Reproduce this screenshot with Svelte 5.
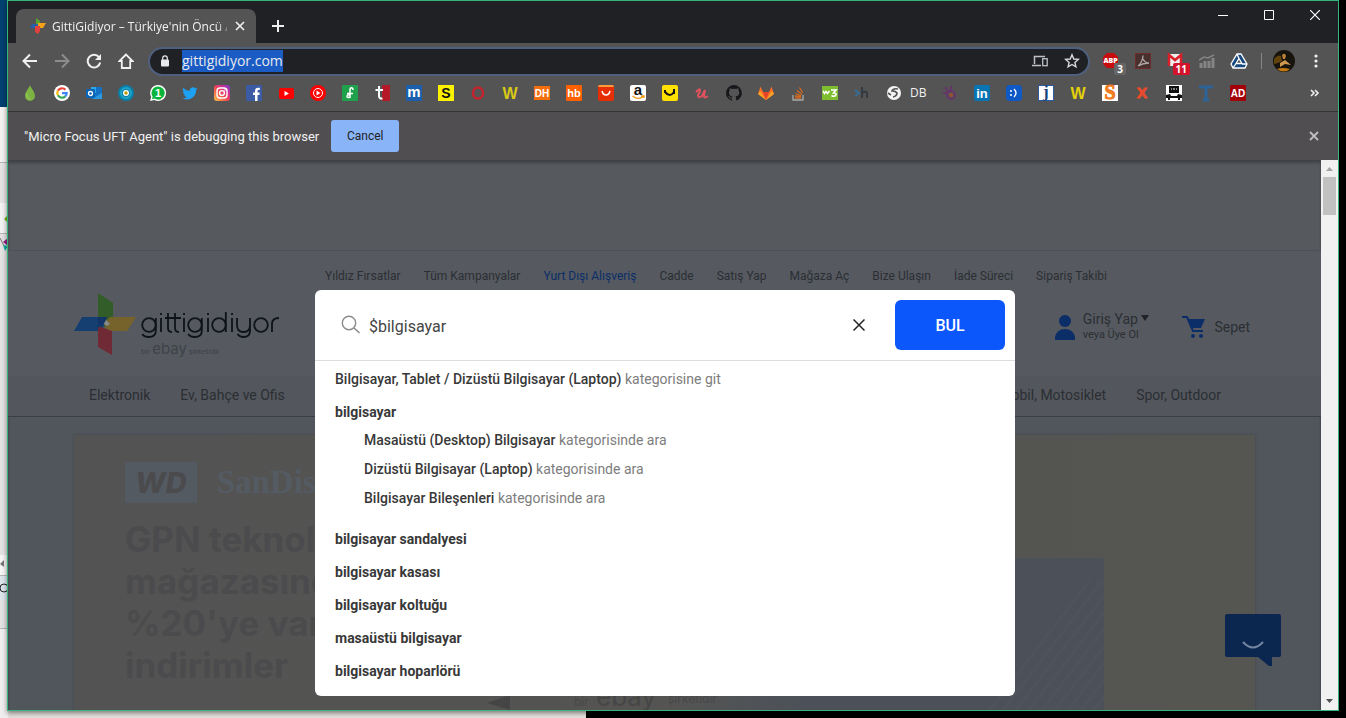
<script>
  import { onMount } from 'svelte';

  let address = $state('gittigidiyor.com');
  let query = $state('$bilgisayar');
  let addressBox;

  onMount(() => {
    addressBox.focus({ preventScroll: true });
    addressBox.select();
  });

  const letter = (s, fill, size = 13, y = 13, extra = 'font-weight="700"') =>
    `<text x="8" y="${y}" text-anchor="middle" font-family="Liberation Sans, sans-serif" font-size="${size}" fill="${fill}" ${extra}>${s}</text>`;
  const tile = (fill, r = 1) => `<rect width="16" height="16" rx="${r}" fill="${fill}"/>`;

  const bookmarks = [
    { name: 'Drop', art: '<path d="M8 0C9 3 13 7 13 11a5 5 0 0 1-10 0C3 7 7 3 8 0Z" fill="#7cb342"/><path d="M5 8q-1 5 3 6" stroke="#9bd05c" fill="none"/>' },
    { name: 'Google', art: '<circle cx="8" cy="8" r="8" fill="#fff"/><g fill="none" stroke-width="2.200"><path d="M3.900 5.700A4.700 4.700 0 0 1 11.400 4.700" stroke="#ea4335"/><path d="M3.900 5.700a4.700 4.700 0 0 0 0 4.600" stroke="#fbbc05"/><path d="M3.900 10.300a4.700 4.700 0 0 0 7.400 1.100" stroke="#34a853"/><path d="M11.300 11.400A4.700 4.700 0 0 0 12.700 8.200H8" stroke="#4285f4"/></g>' },
    { name: 'Outlook', art: '<rect x="5" y="2" width="11" height="12" rx="1" fill="#1470c4"/><path d="M5 2h5v6H5z" fill="#28a8ea"/><path d="M6 14 16 8v6H6z" fill="#2b9ae0"/><rect y="4" width="9" height="9" rx="1" fill="#0a63b5"/><circle cx="4.500" cy="8.500" r="2" fill="none" stroke="#fff" stroke-width="1.300"/>' },
    { name: 'Target', art: '<circle cx="8" cy="8" r="8" fill="#087fa8"/><circle cx="8" cy="8" r="5" fill="none" stroke="#22a4c8" stroke-width="2"/><circle cx="8" cy="8" r="3" fill="#fff"/><circle cx="8" cy="8" r="1.700" fill="#b99800"/>' },
    { name: 'WhatsApp', art: '<path d="M8 0a8 8 0 1 1-3.800 15L0 16l1.200-4A8 8 0 0 1 8 0Z" fill="#fff"/><path d="M8 1.400a6.600 6.600 0 1 1-3.400 12.200L2 14.200l.7-2.500A6.600 6.600 0 0 1 8 1.400Z" fill="#08b43a"/>' + letter('1', '#fff', 11, 12) },
    { name: 'Twitter', art: '<path d="M15.500 3.500l-1.600.6L15 2.400l-2 .8A3.200 3.200 0 0 0 7.600 6 8.800 8.800 0 0 1 1.300 2.700a3.200 3.200 0 0 0 1 4.200L.9 6.500A3.200 3.200 0 0 0 3.400 9.600L2 9.700A3.200 3.200 0 0 0 5 12 6.500 6.500 0 0 1 .4 13.200 9 9 0 0 0 14 5.300Z" fill="#1da1f2"/>' },
    { name: 'Instagram', art: '<defs><linearGradient id="ig" x1="0" y1="1" x2="1" y2="0"><stop offset="0" stop-color="#fdc648"/><stop offset=".45" stop-color="#ef4a4e"/><stop offset=".7" stop-color="#d42e92"/><stop offset="1" stop-color="#6a3fd0"/></linearGradient></defs><rect width="16" height="16" rx="3" fill="url(#ig)"/><g fill="none" stroke="#fff" stroke-width="1.400"><rect x="3" y="3" width="10" height="10" rx="3"/><circle cx="8" cy="8" r="2.400"/></g><circle cx="11" cy="5" r=".8" fill="#fff"/>' },
    { name: 'Facebook', art: tile('#3b5ba5') + '<path d="M9 16V10H7V7.500h2V6c0-2.200 1.200-3.200 3-3.200h1.800v2.300h-1.200c-.9 0-1.100.4-1.100 1.200v1.200h2.200L13.400 10h-1.900v6Z" fill="#fff"/>' },
    { name: 'YouTube', art: '<rect x="1" y="3" width="15" height="11" rx="2" fill="#f00"/><path d="M6.500 6v5L11 8.500Z" fill="#fff"/>' },
    { name: 'YouTube Music', art: '<circle cx="8" cy="8" r="8" fill="#f00"/><circle cx="8" cy="8" r="4.500" fill="none" stroke="#fff"/><path d="M6.500 5.500v5l4-2.500Z" fill="#fff"/>' },
    { name: 'Green', art: tile('#1fa04b') + '<path d="M11 5C11 2 8 2 8 5v8M5 8.500h6M8 10c-4-1-4 4 0 2" stroke="#fff" stroke-width="1.500" fill="none"/>' },
    { name: 'Tureng', art: '<rect x="8" width="8" height="16" fill="#b51826"/><path d="M5 1v10q0 3 3.500 2.500M1.500 5H9" stroke="#fff" stroke-width="2" fill="none"/>' },
    { name: 'm', art: tile('#1b5fad') + letter('m', '#fff', 15, 12) },
    { name: 'S', art: tile('#fff200', 0) + letter('S', '#111', 14, 13) },
    { name: 'O', art: '<ellipse cx="8" cy="8" rx="5" ry="5.500" fill="none" stroke="#c5232d" stroke-width="2.500"/>' },
    { name: 'W', art: letter('W', '#d9c916', 16, 14) },
    { name: 'DH', art: '<rect y="1" width="16" height="14" fill="#f36f0d"/>' + letter('DH', '#fff', 10, 12) },
    { name: 'hb', art: tile('#ff6000') + letter('hb', '#fff', 11, 12) },
    { name: 'AliExpress', art: tile('#e62e04', 2) + '<path d="M2 0h12q2 0 2 2H0q0-2 2-2Z" fill="#ff9a3d"/><path d="M4 6q1 4 4 4t4-4" stroke="#fff" stroke-width="1.500" fill="none"/>' },
    { name: 'Amazon', art: tile('#fff', 2) + letter('a', '#111', 15, 10) + '<path d="M2.500 11q5.500 4.500 11 .5M11 11h3v2" stroke="#f39b18" stroke-width="1.300" fill="none"/>' },
    { name: 'Letgo', art: tile('#ffe000', 2) + '<path d="M3 5v2q5 6 9 0M12 4v5" stroke="#111" stroke-width="2" fill="none"/>' },
    { name: 'Udemy', art: '<path d="M2 7q4-4 4-2T4 10q0 4 4 1l3-6-1 6q0 3 4 0" stroke="#e0525e" stroke-width="2" fill="none"/>' },
    { name: 'GitHub', art: '<path d="M8 0a8 8 0 0 0-2.500 15.600c.4.100.5-.2.500-.4v-1.500c-2.200.5-2.700-1-2.700-1-.4-.9-.9-1.200-.9-1.200-.7-.5.100-.5.100-.5.800.100 1.200.8 1.200.8.700 1.300 1.900.9 2.400.7.100-.5.300-.9.500-1.100-1.800-.2-3.600-.9-3.600-4 0-.9.300-1.600.8-2.100-.100-.2-.4-1 .100-2.100 0 0 .7-.2 2.200.8a7.500 7.500 0 0 1 4 0c1.500-1 2.200-.8 2.200-.8.400 1.100.2 1.900.100 2.100.5.600.8 1.300.8 2.100 0 3.100-1.900 3.700-3.700 4 .3.300.6.800.6 1.500v2.200c0 .2.100.5.500.4A8 8 0 0 0 8 0Z" fill="#16181b"/>' },
    { name: 'GitLab', art: '<path d="M8 15 0 9 2.500 1.500 5 7h6l2.500-5.500L16 9Z" fill="#fc6d26"/><path d="M8 15 5 7h6Z" fill="#e24329"/><path d="M8 15 0 9l2-3ZM8 15l8-6-2-3Z" fill="#fca326"/>' },
    { name: 'Stack Overflow', art: '<path d="M3 10v5h10v-5" stroke="#a9a9a9" stroke-width="1.300" fill="none"/><path d="M5 13h6M5 11l6 .5M5.500 8.500l5.500 2M7 5.500l5 4M9.500 2.500l3 5" stroke="#d26a20" stroke-width="1.300"/>' },
    { name: 'W3', art: '<rect y="1" width="16" height="14" fill="#7ebc30"/><path d="M1 6l1.500 2.500L4 6.500l1.500 2L7.500 6M9 5h5L11.500 8q4 0 2 2.500-2 1.500-4 0" stroke="#fff" stroke-width="1.600" fill="none"/>' },
    { name: 'sh', art: '<path d="M1 5l4 3-4 3" stroke="#396c96" stroke-width="2" fill="none"/><path d="M8 2v11M8 8q5-3 5 1v4" stroke="#333a42" stroke-width="2" fill="none"/>' },
    { name: 'DB', label: 'DB', art: '<circle cx="8" cy="8" r="7" fill="#f5f5f5"/><path d="M12 4q-5-1-6 2 4 0 5 2 0 3-4 4M2 8l3 2" stroke="#555" stroke-width="1.700" fill="none"/>' },
    { name: 'Flower', art: '<g fill="none" stroke="#65346b" stroke-width="2"><circle cx="9" cy="10" r="4"/><path d="M3 2l3 4M9 1v4M1 8h4"/></g><circle cx="9" cy="10" r="2" fill="#99502d"/>' },
    { name: 'LinkedIn', art: tile('#0874b2', 2) + letter('in', '#fff', 13, 13) },
    { name: 'Smile', art: tile('#0e59c6', 4) + '<circle cx="5" cy="6" r="1" fill="#fff"/><circle cx="5" cy="10" r="1" fill="#fff"/><path d="M8 4q4 4 0 8" stroke="#fff" stroke-width="1.300" fill="none"/>' },
    { name: 'j', art: tile('#2d5ca5', 0) + '<rect x="1" y="1" width="14" height="14" fill="#fff"/><text x="8" y="12" text-anchor="middle" font-family="Liberation Serif, serif" font-weight="700" font-size="16" fill="#174280">j</text>' },
    { name: 'W', art: letter('W', '#e3d10a', 16, 14) },
    { name: 'S', art: tile('#fff', 0) + '<text x="8" y="14" text-anchor="middle" font-family="Liberation Serif, serif" font-weight="700" font-size="20" fill="#f07b21" stroke="#f07b21">S</text>' },
    { name: 'X', art: letter('X', '#e94b2b', 15, 13, 'font-weight="700" stroke="#e94b2b"') },
    { name: 'Car', art: tile('#fff', 0) + '<path d="M3 1h10v7H3zM0 10l4-1 1 2h6l1-2 4 1v3h-2v2h-2v-2H4v2H2v-2H0Z" fill="#111"/><path d="M5 4h1M7 4h2M10 4h1" stroke="#fff"/>' },
    { name: 'T', art: '<path d="M1 2h14M8 2v13M5 15h6" stroke="#2d6397" stroke-width="3"/>' },
    { name: 'AD', art: tile('#a40008') + letter('AD', '#fff', 10, 12) }
  ];

  const siteLinks = ['Yıldız Fırsatlar', 'Tüm Kampanyalar', 'Yurt Dışı Alışveriş', 'Cadde', 'Satış Yap', 'Mağaza Aç', 'Bize Ulaşın', 'İade Süreci', 'Sipariş Takibi'];
  const categories = ['Masaüstü (Desktop) Bilgisayar', 'Dizüstü Bilgisayar (Laptop)', 'Bilgisayar Bileşenleri'];
  const related = ['bilgisayar sandalyesi', 'bilgisayar kasası', 'bilgisayar koltuğu', 'masaüstü bilgisayar', 'bilgisayar hoparlörü'];
</script>

<div class="desktop">
  <svg class="behind" width="8" height="718" viewBox="0 0 8 718" aria-hidden="true">
    <rect width="8" height="718" fill="#e4e2e3" />
    <rect width="8" height="107" fill="#00406f" />
    <rect y="107" width="8" height="55" fill="#f3f2f1" />
    <path d="M0 162.500h8M0 210.500h8M0 233.500h8M0 575.500h8M0 628.500h8" stroke="#b5b5b5" />
    <rect y="203" width="8" height="30" fill="#f2f2f2" />
    <path d="M8 215l-4 4 4 4Z" fill="#75b51a" />
    <path d="M0 238l4 8" stroke="#777" />
    <path d="M8 238l-5 4 5 4Z" fill="#9b168b" /><path d="M8 246l-5-1 2 6Z" fill="#13aaa1" />
    <rect y="555" width="8" height="20" fill="#f5f5f5" /><path d="M4 560v7l-4-3Z" fill="#777" />
    <rect y="576" width="8" height="24" fill="#dce4ec" />
    <circle cx="4" cy="588" r="4" fill="none" stroke="#222" />
    <rect y="629" width="8" height="89" fill="#f0eeee" />
  </svg>

  <div class="window">
    <header class="titlebar">
      <div class="tab">
        <svg width="16" height="16" viewBox="0 0 16 16" aria-hidden="true"><path d="M6 0l4 3v5H6Z" fill="#5aa02c" /><path d="M8 5h8l-3 5H8Z" fill="#f5a11a" /><path d="M0 10l2-4h6v4Z" fill="#285fa8" /><path d="M5 8h5v5l-2 3-3-2Z" fill="#e2403c" /></svg>
        <span class="tab-title">GittiGidiyor – Türkiye'nin Öncü Al</span>
        <button aria-label="Close tab"><svg width="10" height="10" viewBox="0 0 10 10"><path d="M1 1l8 8M9 1l-8 8" stroke="#eee" stroke-width="1.700" /></svg></button>
      </div>
      <button class="new-tab" aria-label="New tab"><svg width="12" height="12" viewBox="0 0 12 12"><path d="M6 0v12M0 6h12" stroke="#eee" stroke-width="2" /></svg></button>
      <div class="window-controls">
        <button aria-label="Minimize"><svg width="10" height="10" viewBox="0 0 10 10"><path d="M0 5.500h10" stroke="#fff" /></svg></button>
        <button aria-label="Maximize"><svg width="10" height="10" viewBox="0 0 10 10"><path d="M.5.500h9v9h-9z" stroke="#fff" fill="none" /></svg></button>
        <button aria-label="Close"><svg width="10" height="10" viewBox="0 0 10 10"><path d="M0 0l10 10M10 0L0 10" stroke="#fff" stroke-width="1.200" /></svg></button>
      </div>
    </header>

    <div class="toolbar">
      <button aria-label="Back"><svg width="16" height="16" viewBox="0 0 16 16"><path d="M15 8H2M8 1.500L1.500 8 8 14.500" fill="none" stroke="#f1f1f1" stroke-width="2" /></svg></button>
      <button aria-label="Forward"><svg width="16" height="16" viewBox="0 0 16 16"><path d="M1 8h13M8 1.500L14.500 8 8 14.500" fill="none" stroke="#8d8d8d" stroke-width="2" /></svg></button>
      <button aria-label="Reload"><svg width="16" height="16" viewBox="0 0 16 16"><path d="M13 4.200A6.300 6.300 0 1 0 14.200 9.500" fill="none" stroke="#f1f1f1" stroke-width="2" /><path d="M15 1v6H9Z" fill="#f1f1f1" /></svg></button>
      <button aria-label="Home"><svg width="16" height="16" viewBox="0 0 16 16"><path d="M8 1.500L1.500 8h2.300v7h8.400V8h2.300Z" fill="none" stroke="#f1f1f1" stroke-width="1.800" /></svg></button>
      <div class="omnibox">
        <svg width="10" height="12" viewBox="0 0 10 12" aria-hidden="true"><rect x="1" y="4.500" width="8" height="7" rx="1" fill="#e8eaed" /><path d="M2.700 5V3.200a2.300 2.300 0 0 1 4.600 0V5" fill="none" stroke="#e8eaed" stroke-width="1.200" /></svg>
        <input aria-label="Address" bind:value={address} bind:this={addressBox} spellcheck="false" />
        <button aria-label="Send to devices"><svg width="16" height="14" viewBox="0 0 16 14"><path d="M2.500 10V2.500H13M0 11.500h9" fill="none" stroke="#bdc1c6" stroke-width="1.500" /><rect x="10.700" y="4.700" width="4.500" height="7" fill="none" stroke="#bdc1c6" stroke-width="1.300" /></svg></button>
        <button aria-label="Bookmark this page"><svg width="16" height="16" viewBox="0 0 16 16"><path d="M8 1.800l1.800 4.200 4.500.4-3.400 3 1 4.400L8 11.500l-3.900 2.300 1-4.400-3.400-3L6.200 6Z" fill="none" stroke="#d7d9dc" stroke-width="1.400" /></svg></button>
      </div>
      <button aria-label="Adblock Plus"><svg width="22" height="20" viewBox="0 0 22 20"><path d="M7 2h7l4 4v7l-4 4H7l-4-4V6Z" fill="#c70d0d" /><text x="10.500" y="12" text-anchor="middle" font-family="Open Sans, sans-serif" font-weight="800" font-size="7" fill="#fff">ABP</text></svg><span class="badge gray">3</span></button>
      <button aria-label="PDF"><svg width="16" height="16" viewBox="0 0 16 16"><rect x=".5" y=".5" width="15" height="15" fill="#48302f" stroke="#6b2c2b" /><path d="M3 13C6 11 8 6 8 2.500M8 6q2 4 6 4-6 0-11 3" stroke="#b0a7a6" stroke-width="1.300" fill="none" /></svg></button>
      <button aria-label="Mail"><svg width="22" height="20" viewBox="0 0 22 20"><rect x="4" y="3" width="14" height="12" fill="#eee" /><path d="M5 15V4l6 5 6-5v11" stroke="#d9202a" stroke-width="2.500" fill="none" /></svg><span class="badge red">11</span></button>
      <button aria-label="Statistics"><svg width="16" height="16" viewBox="0 0 16 16"><path d="M2 10v5M6 8v7M10 8v7M14 5v10" stroke="#858585" stroke-width="3" /><path d="M0 7l5-3 4 1 6-3" stroke="#858585" stroke-width="1.500" fill="none" /></svg></button>
      <button aria-label="Drive"><svg width="18" height="16" viewBox="0 0 18 16"><path d="M7 1h4l6 10-2 4H3l-2-4Z" fill="#17497e" stroke="#fff" stroke-width="1.300" /><path d="M9 5.500l3 5H6ZM7 1l2 4.500M17 11h-5M3 15l3-4.500" fill="#545454" stroke="#fff" stroke-width="1.300" /></svg></button>
      <span class="separator"></span>
      <svg class="avatar" width="22" height="22" viewBox="0 0 22 22" role="img" aria-label="Profile"><circle cx="11" cy="11" r="11" fill="#17130d" /><path d="M1 9q4-5 7-3l1 5-4 2-4 1Z" fill="#61430b" /><path d="M9 5q3-3 4 1l-1 3h-2Z" fill="#b98238" /><path d="M7 13l5-3 6 5-6-1-5 3Z" fill="#cf9850" /><path d="M4 19q5-2 13 0-6 5-13 0Z" fill="#c27810" /></svg>
      <button class="more" aria-label="Menu"><svg width="4" height="16" viewBox="0 0 4 16"><g fill="#f1f1f1"><circle cx="2" cy="3" r="1.600" /><circle cx="2" cy="8" r="1.600" /><circle cx="2" cy="13" r="1.600" /></g></svg></button>
    </div>

    <nav class="bookmarks" aria-label="Bookmarks">
      {#each bookmarks as mark}
        <a href="#bookmark" aria-label={mark.name}>
          <svg width="16" height="16" viewBox="0 0 16 16" aria-hidden="true">{@html mark.art}</svg>
          {#if mark.label}<span>{mark.label}</span>{/if}
        </a>
      {/each}
      <button aria-label="More bookmarks"><svg width="10" height="8" viewBox="0 0 10 8"><path d="M1 1l3 3-3 3M5 1l3 3-3 3" fill="none" stroke="#f1f1f1" stroke-width="1.600" /></svg></button>
    </nav>

    <div class="infobar">
      <span>"Micro Focus UFT Agent" is debugging this browser</span>
      <button class="cancel">Cancel</button>
      <button class="dismiss" aria-label="Dismiss"><svg width="10" height="10" viewBox="0 0 10 10"><path d="M1 1l8 8M9 1L1 9" stroke="#c0c0c0" stroke-width="1.800" /></svg></button>
    </div>

    <div class="viewport">
      <div class="page">
        <div class="strip"></div>
        <div class="site-head">
          <div class="inner">
            <nav class="site-links" aria-label="Site">
              {#each siteLinks as link, i}<a href="#site" class:current={i === 2}>{link}</a>{/each}
            </nav>
            <div class="brand-row">
              <a class="logo" href="#home" aria-label="gittigidiyor">
                <svg width="62" height="62" viewBox="0 0 62 62" aria-hidden="true"><path d="M24 0l15 10v20l-8 4-7-5Z" fill="#335d28" /><path d="M8 24h25l-5 14H0Z" fill="#153f70" /><path d="M36 24h26l-9 14H33l-3-8Z" fill="#76622b" /><path d="M24 33l14 5v24l-14-8Z" fill="#702a35" /><path d="M24 24h9l-3 6-6 5Z" fill="#123466" /><path d="M32 27l4 4-3 2-3-2Z" fill="#858b91" /></svg>
                <span class="wordmark">
                  <svg width="140" height="34" viewBox="0 0 140 34" role="img" aria-label="gittigidiyor">
                    <g fill="none" stroke="#0e121b" stroke-width="1.800">
                      <circle cx="8" cy="16" r="6.800" /><path d="M14.800 9v13q0 6-7 6-5 0-6.500-3" />
                      <path d="M20 9v14M20 4v2" />
                      <path d="M27 4v15q0 4 4 4M24 9h16M34 4v15q0 4 4 4" />
                      <path d="M43 9v14M43 4v2" />
                      <circle cx="54" cy="16" r="6.800" /><path d="M60.800 9v13q0 6-7 6-5 0-6.500-3" />
                      <path d="M67 9v14M67 4v2" />
                      <circle cx="78" cy="16" r="6.800" /><path d="M84.800 3v20M91 9v14M91 4v2" />
                      <path d="M96 9v7q0 7 6.500 7t6.500-7V9v13q0 6-6.500 6-4 0-6-3" />
                      <circle cx="120" cy="16" r="6.800" /><path d="M131 23v-8q0-6 7-6" />
                    </g>
                  </svg>
                  <small>bir <b>ebay</b> şirketidir</small>
                </span>
              </a>
              <a class="account" href="#login">
                <svg width="20" height="25" viewBox="0 0 20 25" aria-hidden="true"><circle cx="10" cy="6" r="6" fill="#0b2d68" /><path d="M0 25v-3q2-8 10-8t10 8v3Z" fill="#0b2d68" /></svg>
                <span>Giriş Yap <svg width="8" height="6" viewBox="0 0 8 6" aria-hidden="true"><path d="M0 0h8L4 6Z" fill="#202327" /></svg><small>veya Üye Ol</small></span>
              </a>
              <a class="cart" href="#cart">
                <svg width="24" height="22" viewBox="0 0 24 22" aria-hidden="true"><path d="M0 1h5l6 14h10" fill="none" stroke="#0b2d68" stroke-width="2" /><path d="M6 3h17l-4 9H9Z" fill="#0b2d68" /><circle cx="11" cy="20" r="2" fill="#0b2d68" /><circle cx="19" cy="20" r="2" fill="#0b2d68" /></svg>
                Sepet
              </a>
            </div>
          </div>
        </div>
        <nav class="departments" aria-label="Departments">
          <div class="inner">
            <a href="#d">Elektronik</a><a href="#d">Ev, Bahçe ve Ofis</a>
            <a class="push" href="#d">Otomobil, Motosiklet</a><a href="#d">Spor, Outdoor</a>
          </div>
        </nav>
        <section class="inner hero">
          <div class="hero-text">
            <div class="sponsors"><span class="wd">WD</span><span class="sandisk">SanDisk</span></div>
            <h1>GPN teknoloji mağazasında %20'ye varan indirimler</h1>
          </div>
          <svg class="hero-art" width="620" height="152" viewBox="0 0 620 152" aria-hidden="true">
            <defs><linearGradient id="fade"><stop offset="0" stop-color="#4c5159" stop-opacity="0" /><stop offset=".3" stop-color="#4c5159" /></linearGradient></defs>
            <path d="M190 0h430v152H190Z" fill="url(#fade)" />
            <path d="M3 145l23-8v15Z" fill="#454545" />
            {#each Array(9) as _, i}<path d="M{506 + i * 13} 152L{606 + i * 13} 22" stroke="#555a61" stroke-width="2" opacity=".35" />{/each}
            <text x="90" y="148" font-family="Inter, sans-serif" font-size="12" fill="#484848">bir</text>
            <text x="112" y="148" font-family="Inter, sans-serif" font-size="26" fill="#464646">ebay</text>
            <text x="184" y="145" font-family="Inter, sans-serif" font-size="12" fill="#484848">şirketidir</text>
          </svg>
        </section>
      </div>

      <button class="chat" aria-label="Chat"><svg width="56" height="52" viewBox="0 0 56 52"><path d="M2 0h52q2 0 2 2v39q0 2-2 2h-7v9h-3L33 43H2q-2 0-2-2V2q0-2 2-2Z" fill="#0b2750" /><path d="M18 28q10 11 20 0" fill="none" stroke="#7586a0" stroke-width="2" /></svg></button>

      <div class="scrollbar"><svg width="7" height="4" viewBox="0 0 7 4"><path d="M0 4h7L3.500 0Z" fill="#a3a3a3" /></svg><div class="thumb"></div><svg width="7" height="4" viewBox="0 0 7 4"><path d="M0 0h7L3.500 4Z" fill="#505050" /></svg></div>

      <div class="search">
        <form onsubmit={(e) => e.preventDefault()}>
          <svg width="20" height="20" viewBox="0 0 20 20" aria-hidden="true"><circle cx="8" cy="8" r="6.700" fill="none" stroke="#8b8b8b" stroke-width="1.400" /><path d="M13 13l5.500 5" stroke="#8b8b8b" stroke-width="1.600" /></svg>
          <input aria-label="Ara" bind:value={query} spellcheck="false" />
          <button class="clear" type="button" aria-label="Temizle"><svg width="12" height="12" viewBox="0 0 12 12"><path d="M.5.500l11 11M11.500.500l-11 11" stroke="#222" stroke-width="1.500" /></svg></button>
          <button class="find">BUL</button>
        </form>
        <ul>
          <li><a href="#s">Bilgisayar, Tablet / Dizüstü Bilgisayar (Laptop) <span>kategorisine git</span></a></li>
          <li class="strong"><a href="#s">bilgisayar</a>
            <ul>
              {#each categories as c}<li><a href="#s">{c} <span>kategorisinde ara</span></a></li>{/each}
            </ul>
          </li>
          {#each related as r}<li class="strong"><a href="#s">{r}</a></li>{/each}
        </ul>
      </div>
    </div>
  </div>
</div>

<style>
  :global(body) { margin: 0; overflow: hidden; }
  * { box-sizing: border-box; }
  svg { display: block; flex: none; }
  a { color: inherit; text-decoration: none; }
  button { display: flex; align-items: center; justify-content: center; padding: 0; border: 0; background: none; font: inherit; color: inherit; flex: none; }
  input { border: 0; padding: 0; background: none; outline: 0; min-width: 0; flex: 1; }
  ul { list-style: none; margin: 0; padding: 0; }

  .desktop { position: relative; height: 100vh; padding: 0 7px 7px; background: linear-gradient(90deg, #e4e0de 586px, #000 586px); font-family: "Open Sans", "Noto Sans", sans-serif; }
  .behind { position: absolute; left: 0; top: 0; }
  .window { position: relative; display: flex; flex-direction: column; height: 100%; border: 1px solid #35b57c; box-shadow: 0 2px 5px #0007; color: #f1f1f1; background: #545454; }

  .titlebar { display: flex; align-items: flex-end; height: 42px; flex: none; padding-left: 8px; background: #202124; }
  .tab { display: flex; align-items: center; gap: 6px; width: 240px; height: 34px; padding: 0 9px 0 14px; border-radius: 8px 8px 0 0; background: #545454; font-size: 12px; }
  .tab-title { flex: 1; overflow: hidden; white-space: nowrap; mask-image: linear-gradient(90deg, #000 164px, transparent 182px); }
  .tab button { width: 14px; height: 14px; }
  .new-tab { width: 28px; height: 28px; margin: 0 0 3px 8px; }
  .window-controls { display: flex; align-self: flex-start; margin-left: auto; }
  .window-controls button { width: 46px; height: 28px; }

  .toolbar { display: flex; align-items: center; height: 36px; flex: none; padding: 0 6px; }
  .toolbar button { position: relative; width: 32px; height: 32px; }
  .omnibox { display: flex; align-items: center; flex: 1; height: 29px; margin: 0 5px 0 6px; padding: 0 0 0 10px; border: 2px solid #4f607f; border-radius: 15px; background: #202124; }
  .omnibox input { margin-left: 12px; height: 22px; font: 14px/22px "Open Sans", "Noto Sans", sans-serif; color: #e8eaed; }
  .omnibox input::selection { background: #1a5bc4; color: #e8eaed; }
  .badge { position: absolute; right: 1px; bottom: 2px; min-width: 12px; padding: 0 3px; border-radius: 2px; font-size: 10px; line-height: 12px; font-weight: 700; color: #fff; }
  .gray { background: #666; }
  .red { background: #d3122c; }
  .separator { width: 1px; height: 16px; margin: 0 11px 0 6px; background: #888; }
  .toolbar .more { margin-left: 5px; }

  .bookmarks { display: flex; align-items: center; gap: 16px; height: 32px; flex: none; padding: 0 18px 5px 14px; font-size: 12px; }
  .bookmarks a { display: flex; align-items: center; gap: 8px; }
  .bookmarks svg { overflow: visible; }
  .bookmarks button { width: 10px; margin-left: auto; }
  .infobar { display: flex; align-items: center; gap: 12px; height: 49px; flex: none; padding: 0 19px 0 16px; border-top: 1px solid #343434; background: #504e50; font: 13px Roboto, sans-serif; }
  .cancel { width: 68px; height: 32px; border-radius: 3px; background: #8ab4f8; color: #202124; font-size: 12px; }
  .dismiss { margin-left: auto; }

  .viewport { position: relative; display: flex; flex: 1; min-height: 0; font-family: Roboto, sans-serif; }
  .page { flex: 1; min-width: 0; overflow: hidden; background: #51565d; color: #2b2e33; box-shadow: inset 0 3px 3px #0005; }
  .inner { width: calc(100% - 132px); margin: 0 auto; }
  .strip { height: 91px; border-bottom: 1px solid #4d5258; background: #565a5f; box-shadow: inset 0 3px 3px #0004; }
  .site-head { height: 125px; background: #565a60; }
  .site-links { display: flex; gap: 23px; padding: 17px 0 0 251px; font-size: 12px; line-height: 16px; white-space: nowrap; }
  .current { color: #0b2d68; }
  .brand-row { display: flex; align-items: center; height: 62px; margin-top: 10px; padding-right: 5px; }
  .logo { display: flex; gap: 5px; margin-right: auto; }
  .wordmark { padding-top: 16px; }
  .wordmark small { display: block; font-size: 8px; line-height: 12px; color: #3e4247; }
  .wordmark b { font: 400 15px/12px Inter, sans-serif; }
  .account, .cart { display: flex; align-items: center; gap: 8px; padding-top: 4px; font-size: 14px; line-height: 16px; }
  .account span svg { display: inline-block; vertical-align: 3px; }
  .account small { display: block; font-size: 11px; }
  .cart { margin-left: 33px; }
  .departments { height: 41px; border-bottom: 1px solid #3b3e42; background: #53575d; font-size: 14px; line-height: 38px; }
  .departments .inner { display: flex; gap: 30px; padding: 0 34px 0 15px; }
  .push { margin-left: auto; }
  .hero { position: relative; display: flex; height: 360px; margin-top: 18px; background: linear-gradient(90deg, #535353, #555552); box-shadow: 0 0 3px #0003; color: #4b4b4d; }
  .hero-text { width: 360px; padding: 27px 0 0 51px; }
  .sponsors { display: flex; align-items: center; gap: 20px; height: 41px; }
  .wd { padding: 0 10px; background: #545a62; font: italic 800 29px/41px Inter, sans-serif; }
  .sandisk { font: 700 33px/41px "Liberation Serif", serif; color: #555b63; }
  h1 { margin: 15px 0 0; font: 700 35px/42px Inter, sans-serif; }
  .hero-art { position: absolute; left: 410px; top: 123px; }
  .chat { position: absolute; right: 57px; bottom: 44px; }
  .scrollbar { display: flex; flex-direction: column; align-items: center; width: 17px; padding: 7px 0; background: #f1f1f1; }
  .thumb { width: 13px; height: 38px; margin: 6px 0 auto; background: #c1c1c1; }

  .search { position: absolute; left: calc(50% - 8px); top: 130px; transform: translateX(-50%); width: 700px; height: 406px; border-radius: 6px; background: #fff; color: #383838; font-size: 14px; }
  form { display: flex; align-items: center; height: 71px; padding: 0 10px 0 26px; border-bottom: 1px solid #ddd; }
  form input { margin-left: 8px; height: 26px; padding-top: 2px; font: 16px/24px Roboto, sans-serif; color: #444; }
  .clear { width: 32px; height: 32px; margin-right: 20px; }
  .find { width: 110px; height: 50px; border-radius: 6px; background: #0b57fb; color: #fff; font-size: 16px; font-weight: 500; }
  .search > ul { padding: 2px 20px; line-height: 33px; font-weight: 500; }
  .search ul ul { padding: 0 0 10px 29px; line-height: 29px; font-weight: 500; margin-top: -3px; }
  .search .strong { font-weight: 700; }
  li span { font-weight: 400; color: #7d7d7d; }
</style>
